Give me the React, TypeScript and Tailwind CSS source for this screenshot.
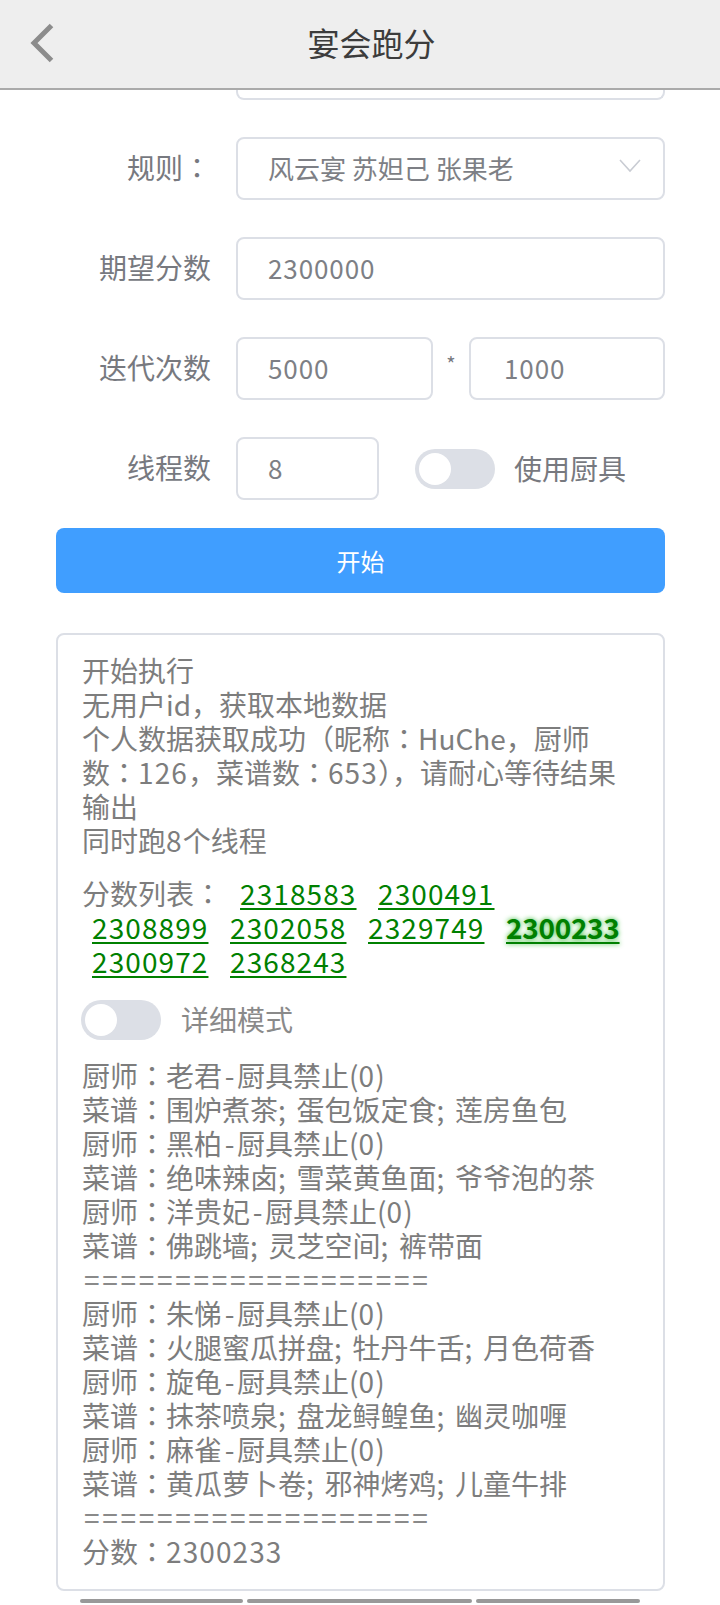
import React from "react";

const FONT = "[font-family:'Noto_Sans_CJK_SC','Noto_Sans',sans-serif]";

function C() {
  return <span className="[font-family:'Noto_Sans_CJK_TC',sans-serif]">：</span>;
}
function N({ children }: { children: React.ReactNode }) {
  return <span className="tracking-[1.1px]">{children}</span>;
}
function Field({ className, children }: { className: string; children: React.ReactNode }) {
  return (
    <div className={`h-[63px] flex items-center pl-[30px] pb-[3px] border-2 border-[#dcdfe6] rounded-lg text-[26px] text-[#7d7f85] bg-white tracking-[0.9px] ${className}`}>
      {children}
    </div>
  );
}
function Label({ children }: { children: React.ReactNode }) {
  return <div className="w-[211px] pb-[3px] text-right text-[28px] text-[#77797f] mr-[25px] shrink-0">{children}</div>;
}
function Chef({ name }: { name: string }) {
  return (
    <div>
      厨师<C />{name}
      <span className="inline-block w-[15px] text-center">-</span>厨具禁止(<N>0</N>)
    </div>
  );
}
function Recipe({ items }: { items: string[] }) {
  return (
    <div>
      菜谱<C />
      {items.map((item, i) => (
        <React.Fragment key={item}>
          {i > 0 && <span className="inline-block w-[18.5px]">;</span>}
          {item}
        </React.Fragment>
      ))}
    </div>
  );
}
function Dashes() {
  return <div className="tracking-[2.7px] pl-[2px] text-[#8a8a8a]">===================</div>;
}
function Score({ value, best, first }: { value: string; best?: boolean; first?: boolean }) {
  return (
    <span
      className={`inline-block w-[117px] text-[#008000] underline decoration-2 underline-offset-[3px] ${first ? "ml-[18px]" : "ml-[21px]"} ${best ? "font-bold tracking-[-0.3px] [text-shadow:0_0_5px_#33bb33]" : "tracking-[1.1px]"}`}
    >
      {value}
    </span>
  );
}
function Toggle({ className = "" }: { className?: string }) {
  return (
    <div className={`w-[80px] h-[40px] rounded-full bg-[#dcdfe6] flex items-center pl-[4px] shrink-0 ${className}`}>
      <div className="w-[32px] h-[32px] rounded-full bg-white" />
    </div>
  );
}

export default function App() {
  return (
    <div className={`w-[720px] h-[1605px] overflow-hidden bg-white ${FONT}`}>
      <header className="h-[90px] bg-[#eeeeee] border-b-2 border-[#aaaaaa] flex items-center pl-[30px] pr-[31px]">
        <svg width="24" height="40" viewBox="0 0 24 40" className="shrink-0 -mt-[2px]">
          <path d="M21.5 2.5 L4 20 L21.5 37.5" fill="none" stroke="#8c8c8c" strokeWidth="5" />
        </svg>
        <h1 className="flex-1 pb-[4px] text-center text-[32px] text-[#3c3c3c]">宴会跑分</h1>
      </header>

      <div className="ml-[236px] mr-[55px] h-[10px] border-2 border-t-0 border-[#dcdfe6] rounded-b-lg" />

      <div className="pr-[55px] pt-[37px] flex flex-col gap-[37px]">
        <div className="flex items-center">
          <Label>规则<C /></Label>
          <Field className="flex-1 justify-between pr-[22px] tracking-normal">
            <span>风云宴 苏妲己 张果老</span>
            <svg width="22" height="14" viewBox="0 0 22 14" className="-mt-[2px]">
              <path d="M1 1 L11 12 L21 1" fill="none" stroke="#c9ccd3" strokeWidth="1.6" />
            </svg>
          </Field>
        </div>
        <div className="flex items-center">
          <Label>期望分数</Label>
          <Field className="flex-1">2300000</Field>
        </div>
        <div className="flex items-center">
          <Label>迭代次数</Label>
          <Field className="w-[197px]">5000</Field>
          <span className="w-[36px] text-center text-[20px] leading-none text-[#77797f] -mt-[10px]">*</span>
          <Field className="w-[196px] pl-[33px]">1000</Field>
        </div>
        <div className="flex items-center">
          <Label>线程数</Label>
          <Field className="w-[143px]">8</Field>
          <Toggle className="ml-[36px]" />
          <span className="ml-[19px] pb-[2px] text-[28px] text-[#77797f]">使用厨具</span>
        </div>
      </div>

      <button className="block mt-[28px] ml-[56px] w-[609px] h-[65px] rounded-lg bg-[#409eff] text-white text-[24px]">
        开始
      </button>

      <section className="mt-[40px] ml-[56px] w-[609px] h-[958px] border-2 border-[#dcdfe6] rounded-lg pt-[18px] pl-[24px] text-[28px] leading-[34px] text-[#7d7d7d]">
        <div>开始执行</div>
        <div>无用户id，获取本地数据</div>
        <div>
          个人数据获取成功（昵称<C />HuChe，厨师
        </div>
        <div>
          数<C /><N>126</N>，菜谱数<C /><N>653</N>），请耐心等待结果
        </div>
        <div>输出</div>
        <div>
          同时跑<N>8</N>个线程
        </div>

        <div className="mt-[19px]">
          分数列表<C />
          <Score value="2318583" first />
          <Score value="2300491" />
        </div>
        <div className="-ml-[11px]">
          <Score value="2308899" />
          <Score value="2302058" />
          <Score value="2329749" />
          <Score value="2300233" best />
        </div>
        <div className="-ml-[11px]">
          <Score value="2300972" />
          <Score value="2368243" />
        </div>

        <div className="mt-[22px] flex items-center -ml-[1px]">
          <Toggle />
          <span className="ml-[20px] pb-[3px] text-[#8a8a8a]">详细模式</span>
        </div>

        <div className="mt-[18px]">
          <Chef name="老君" />
          <Recipe items={["围炉煮茶", "蛋包饭定食", "莲房鱼包"]} />
          <Chef name="黑柏" />
          <Recipe items={["绝味辣卤", "雪菜黄鱼面", "爷爷泡的茶"]} />
          <Chef name="洋贵妃" />
          <Recipe items={["佛跳墙", "灵芝空间", "裤带面"]} />
          <Dashes />
          <Chef name="朱悌" />
          <Recipe items={["火腿蜜瓜拼盘", "牡丹牛舌", "月色荷香"]} />
          <Chef name="旋龟" />
          <Recipe items={["抹茶喷泉", "盘龙鲟鳇鱼", "幽灵咖喱"]} />
          <Chef name="麻雀" />
          <Recipe items={["黄瓜萝卜卷", "邪神烤鸡", "儿童牛排"]} />
          <Dashes />
          <div>
            分数<C /><N>2300233</N>
          </div>
        </div>
      </section>

      <div className="mt-[8px] ml-[80px] w-[560px] flex gap-[4px]">
        <div className="w-[163px] h-[4px] rounded-sm bg-[#999999]" />
        <div className="w-[225px] h-[4px] rounded-sm bg-[#999999]" />
        <div className="w-[164px] h-[4px] rounded-sm bg-[#999999]" />
      </div>
    </div>
  );
}
